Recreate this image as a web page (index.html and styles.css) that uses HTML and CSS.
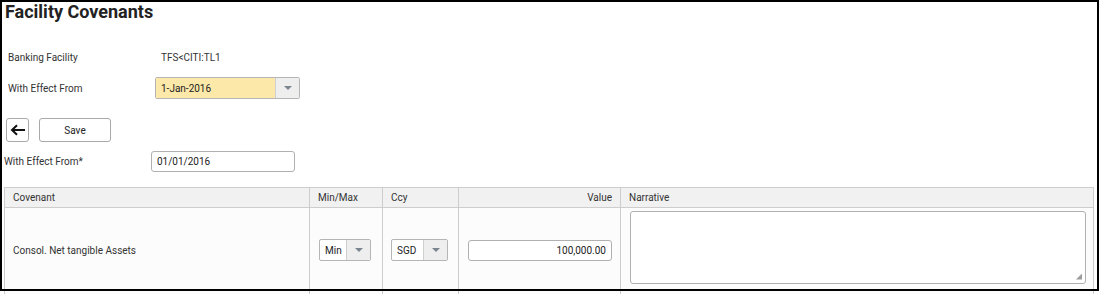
FILE: index.html
```html
<!DOCTYPE html>
<html>
<head>
<meta charset="utf-8">
<link rel="stylesheet" href="styles.css">
</head>
<body>
<div class="page">
  <h1 class="title">Facility Covenants</h1>
  <div class="info">
    <div class="info-row">
      <span class="info-label">Banking Facility</span>
      <span class="info-value">TFS&lt;CITI:TL1</span>
    </div>
    <div class="info-row">
      <span class="info-label">With Effect From</span>
      <div class="combo combo-date">
        <span class="combo-text">1-Jan-2016</span>
        <span class="combo-arrow"><span class="tri"></span></span>
      </div>
    </div>
  </div>
  <div class="actions">
    <button class="btn btn-back" type="button">
      <svg width="16" height="12" viewBox="0 0 16 12"><path d="M15 6H2.5M7 1.2L2 6l5 4.8" fill="none" stroke="#111" stroke-width="2"/></svg>
    </button>
    <button class="btn btn-save" type="button">Save</button>
  </div>
  <div class="field">
    <span class="field-label">With Effect From*</span>
    <div class="textbox textbox-date">01/01/2016</div>
  </div>
  <table class="grid">
    <thead>
      <tr>
        <th class="c-cov">Covenant</th>
        <th class="c-mm">Min/Max</th>
        <th class="c-ccy">Ccy</th>
        <th class="c-val num">Value</th>
        <th class="c-nar">Narrative</th>
      </tr>
    </thead>
    <tbody>
      <tr>
        <td class="c-cov">Consol. Net tangible Assets</td>
        <td class="c-mm">
          <div class="combo combo-mm">
            <span class="combo-text">Min</span>
            <span class="combo-arrow"><span class="tri"></span></span>
          </div>
        </td>
        <td class="c-ccy">
          <div class="combo combo-ccy">
            <span class="combo-text">SGD</span>
            <span class="combo-arrow"><span class="tri"></span></span>
          </div>
        </td>
        <td class="c-val">
          <div class="textbox textbox-num">100,000.00</div>
        </td>
        <td class="c-nar">
          <div class="textarea"><span class="grip"></span></div>
        </td>
      </tr>
    </tbody>
  </table>
</div>
</body>
</html>
```

FILE: styles.css
```css
html, body {
  margin: 0;
  padding: 0;
  background: #fff;
}
body {
  font-family: Roboto, "Liberation Sans", Arial, sans-serif;
  font-size: 10px;
  color: #333;
  width: 1101px;
  height: 294px;
  overflow: hidden;
}
.page {
  position: relative;
  height: 294px;
  padding-left: 4px;
}
.page::after {
  content: "";
  position: absolute;
  left: 0;
  top: 0;
  width: 1095px;
  height: 287px;
  border: 2px solid #000;
  pointer-events: none;
}
.title {
  margin: 0;
  padding: 1px 0 0 1px;
  height: 25px;
  font-size: 18px;
  font-weight: 700;
  line-height: 22px;
  color: #222;
}
.info {
  padding: 20px 0 0 4px;
  display: flex;
  flex-direction: column;
  gap: 9px;
}
.info-row {
  display: flex;
  align-items: center;
  height: 22px;
}
.info-label {
  width: 147px;
}
.info-value {
  padding-left: 6px;
  color: #333;
}
.combo {
  display: flex;
  box-sizing: border-box;
  height: 22px;
  border: 1px solid #b5b5b5;
  border-radius: 2px;
  background: #fff;
  overflow: hidden;
}
.combo-text {
  flex: 1;
  display: flex;
  align-items: center;
  padding-left: 5px;
  color: #222;
}
.combo-arrow {
  width: 23px;
  border-left: 1px solid #cfcfcf;
  background: #eeeeee;
  display: flex;
  align-items: center;
  justify-content: center;
}
.tri {
  width: 0;
  height: 0;
  border-left: 4px solid transparent;
  border-right: 4px solid transparent;
  border-top: 4px solid #7a8590;
}
.combo-date {
  width: 145px;
}
.combo-date .combo-text {
  background: #fce9a9;
}
.actions {
  display: flex;
  gap: 10px;
  margin-top: 19px;
  padding-left: 2px;
}
.btn {
  box-sizing: border-box;
  height: 24px;
  border: 1px solid #a9a9a9;
  border-radius: 3px;
  background: #fff;
  font-family: inherit;
  font-size: 10px;
  color: #222;
  padding: 0;
  display: flex;
  align-items: center;
  justify-content: center;
}
.btn-back {
  width: 23px;
}
.btn-save {
  width: 72px;
}
.field {
  display: flex;
  align-items: center;
  margin-top: 8px;
  height: 22px;
}
.field-label {
  width: 147px;
}
.textbox {
  box-sizing: border-box;
  height: 21px;
  border: 1px solid #b0b0b0;
  border-radius: 3px;
  background: #fff;
  display: flex;
  align-items: center;
  padding: 0 5px;
  color: #222;
}
.textbox-date {
  width: 144px;
}
.grid {
  margin-top: 15px;
  border-collapse: collapse;
  width: 1090px;
  table-layout: fixed;
}
.grid th, .grid td {
  border: 1px solid #cdcdcd;
  padding: 0 8px;
  text-align: left;
  font-weight: 400;
}
.grid th {
  height: 19px;
  background: #f1f1f1;
  color: #333;
}
.grid td {
  height: 84px;
  padding-bottom: 6px;
  vertical-align: middle;
  background: #fcfcfc;
  border-bottom-color: transparent;
}
.grid .num {
  text-align: right;
}
.c-cov { width: 288px; }
.c-mm { width: 56px; }
.c-ccy { width: 59px; }
.c-val { width: 145px; }
.c-nar { width: auto; }
.combo-mm { width: 52px; margin-left: 1px; }
.combo-ccy { width: 57px; }
.textbox-num {
  width: 144px;
  justify-content: flex-end;
  margin-left: 1px;
}
.textarea {
  position: relative;
  box-sizing: border-box;
  width: 456px;
  height: 73px;
  border: 1px solid #b0b0b0;
  border-radius: 3px;
  background: #fff;
  margin-left: 1px;
  margin-bottom: 6px;
}
.grip {
  position: absolute;
  right: 3px;
  bottom: 3px;
  width: 6px;
  height: 6px;
  background:
    radial-gradient(circle, #999 0.7px, transparent 1px) 0 0 / 2px 2px;
  clip-path: polygon(100% 0, 100% 100%, 0 100%);
}
```
